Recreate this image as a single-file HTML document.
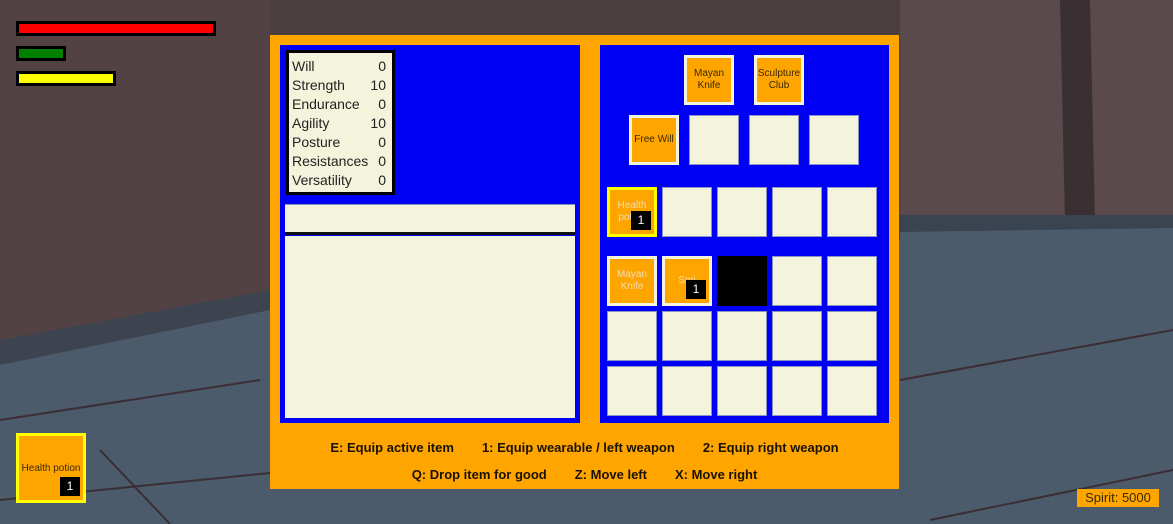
<!DOCTYPE html>
<html><head><style>
*{margin:0;padding:0;box-sizing:border-box}
body{width:1173px;height:524px;overflow:hidden;position:relative;font-family:"Liberation Sans",sans-serif;background:#4b5a6a}
.a{position:absolute}
.bar{position:absolute;border:3px solid #000}
.slot{position:absolute;width:50px;height:50px;background:#f4f4dc;border:1px solid #8a93c8}
.it{position:absolute;width:50px;height:50px;background:#ffa500;border:3px solid #f4f4dc;font-size:10px;color:#3a2a00;display:flex;align-items:center;justify-content:center;text-align:center;line-height:12px}
.n{position:absolute;background:#000;color:#fff;font-size:12px;width:20px;height:19px;text-align:center;line-height:19px}
.stats div{display:flex;justify-content:space-between;height:19px;line-height:19px}
.help{position:absolute;left:270px;width:629px;text-align:center;font-weight:bold;font-size:13px;color:#1a1200}
.help span{margin:0 14px}
</style></head><body>
<svg class="a" style="left:0;top:0" width="1173" height="524">
<rect width="1173" height="524" fill="#4c5b6b"/>
<polygon points="0,0 1173,0 1173,222 900,222 900,240 270,300 0,355" fill="#4a3e40"/>
<polygon points="0,0 270,0 270,300 0,355" fill="#524244"/>
<polygon points="900,0 1173,0 1173,222 900,222" fill="#5a4a4c"/>
<polygon points="1060,0 1090,0 1095,222 1065,222" fill="#3a3034"/>
<polygon points="0,340 270,290 270,310 0,365" fill="#3d4450"/>
<polygon points="900,215 1173,215 1173,228 900,232" fill="#3a4350"/>
<path d="M0,500 L300,470 M0,420 L260,380 M900,380 L1173,330 M930,520 L1173,470 M100,450 L170,524" stroke="#3a2e34" stroke-width="2" fill="none"/>
</svg>
<div class="bar" style="left:16px;top:21px;width:200px;height:15px;background:#f00"></div>
<div class="bar" style="left:16px;top:46px;width:50px;height:15px;background:#008000"></div>
<div class="bar" style="left:16px;top:71px;width:100px;height:15px;background:#ff0"></div>

<div class="a" style="left:270px;top:35px;width:629px;height:454px;background:#ffa500"></div>
<div class="a" style="left:280px;top:45px;width:300px;height:378px;background:#0000f5"></div>
<div class="a stats" style="left:286px;top:50px;width:109px;height:145px;background:#f4f4dc;border:3px solid #000;padding:4px 6px 0 3px;font-size:14px;color:#222">
<div><span>Will</span><span>0</span></div>
<div><span>Strength</span><span>10</span></div>
<div><span>Endurance</span><span>0</span></div>
<div><span>Agility</span><span>10</span></div>
<div><span>Posture</span><span>0</span></div>
<div><span>Resistances</span><span>0</span></div>
<div><span>Versatility</span><span>0</span></div>
</div>
<div class="a" style="left:285px;top:204px;width:290px;height:29px;background:#f4f4dc;border-top:1px solid #8a93c8"></div>
<div class="a" style="left:285px;top:232px;width:290px;height:3px;background:#111"></div>
<div class="a" style="left:285px;top:236px;width:290px;height:182px;background:#f4f4dc"></div>

<div class="a" style="left:600px;top:45px;width:289px;height:378px;background:#0000f5"></div>
<div class="it" style="left:684px;top:55px">Mayan<br>Knife</div>
<div class="it" style="left:754px;top:55px">Sculpture<br>Club</div>
<div class="it" style="left:629px;top:115px">Free Will</div>
<div class="slot" style="left:689px;top:115px"></div>
<div class="slot" style="left:749px;top:115px"></div>
<div class="slot" style="left:809px;top:115px"></div>

<div class="it" style="left:607px;top:187px;border-color:#ff0;color:#f4dcb0">Health<br>potion</div>
<div class="n" style="left:631px;top:211px">1</div>
<div class="slot" style="left:662px;top:187px"></div>
<div class="slot" style="left:717px;top:187px"></div>
<div class="slot" style="left:772px;top:187px"></div>
<div class="slot" style="left:827px;top:187px"></div>

<div class="it" style="left:607px;top:256px;color:#f4dcb0">Mayan<br>Knife</div>
<div class="it" style="left:662px;top:256px;color:#f4dcb0">Smi</div>
<div class="n" style="left:686px;top:280px">1</div>
<div class="a" style="left:717px;top:256px;width:50px;height:50px;background:#000"></div>
<div class="slot" style="left:772px;top:256px"></div>
<div class="slot" style="left:827px;top:256px"></div>
<div class="slot" style="left:607px;top:311px"></div><div class="slot" style="left:662px;top:311px"></div><div class="slot" style="left:717px;top:311px"></div><div class="slot" style="left:772px;top:311px"></div><div class="slot" style="left:827px;top:311px"></div>
<div class="slot" style="left:607px;top:366px"></div><div class="slot" style="left:662px;top:366px"></div><div class="slot" style="left:717px;top:366px"></div><div class="slot" style="left:772px;top:366px"></div><div class="slot" style="left:827px;top:366px"></div>

<div class="help" style="top:440px"><span>E: Equip active item</span><span>1: Equip wearable / left weapon</span><span>2: Equip right weapon</span></div>
<div class="help" style="top:467px"><span>Q: Drop item for good</span><span>Z: Move left</span><span>X: Move right</span></div>

<div class="a" style="left:16px;top:433px;width:70px;height:70px;background:#ffa500;border:3px solid #ff0;font-size:10px;color:#3a2a00;text-align:center;padding-top:27px">Health potion</div>
<div class="n" style="left:60px;top:477px">1</div>
<div class="a" style="left:1077px;top:489px;width:82px;height:18px;background:#ffa500;font-size:13px;color:#3a2a00;line-height:18px;text-align:center">Spirit: 5000</div>
</body></html>
